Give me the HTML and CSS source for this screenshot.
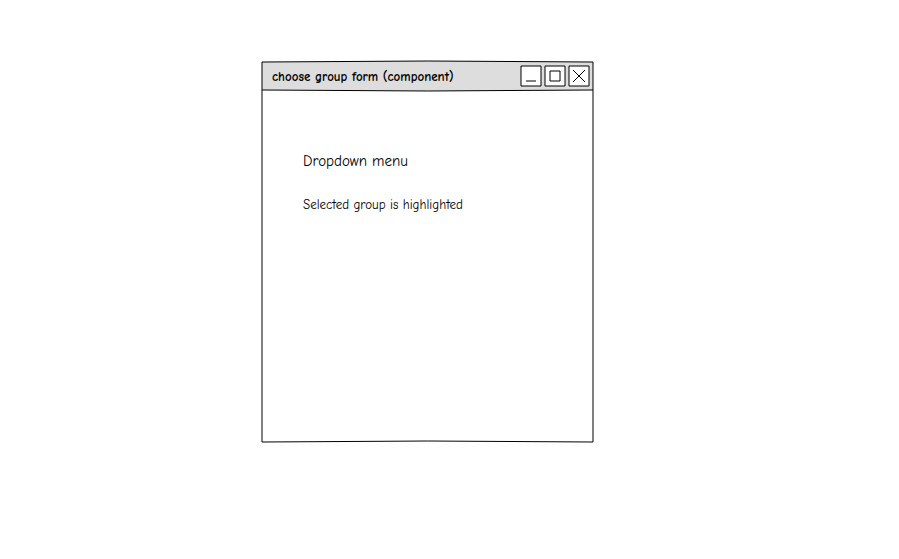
FILE: index.html
```html
<!DOCTYPE html>
<html lang="en">
<head>
<meta charset="utf-8">
<title>choose group form (component)</title>
<link rel="stylesheet" href="styles.css">
</head>
<body>
<main class="window">
  <header class="titlebar">
    <svg class="outline" viewBox="0 0 333 32" preserveAspectRatio="none" aria-hidden="true">
      <path class="bar" d="M1 2Q167 0 332 2V30Q167 32 1 30Z"/>
    </svg>
    <h1 class="title">choose group form (component)</h1>
    <div class="controls">
      <button class="control" type="button" aria-label="Minimize">
        <svg viewBox="0 0 22 22"><path class="box" d="M1 1H21V21H1Z"/><path d="M6 16H16"/></svg>
      </button>
      <button class="control" type="button" aria-label="Maximize">
        <svg viewBox="0 0 22 22"><path class="box" d="M1 1H21V21H1Z"/><path d="M6 6H16V16H6Z"/></svg>
      </button>
      <button class="control" type="button" aria-label="Close">
        <svg viewBox="0 0 22 22"><path class="box" d="M1 1H21V21H1Z"/><path d="M5 5L17 17M17 5L5 17"/></svg>
      </button>
    </div>
  </header>
  <section class="content">
    <svg class="outline" viewBox="0 0 333 352" preserveAspectRatio="none" aria-hidden="true">
      <path d="M1 -2V350Q167 348 332 350V-2"/>
    </svg>
    <h2 class="heading">Dropdown menu</h2>
    <p class="note">Selected group is highlighted</p>
  </section>
</main>
</body>
</html>
```
FILE: styles.css
```css
* {
  box-sizing: border-box;
}

body {
  display: grid;
  grid-template-columns: 261fr 333fr 305fr;
  margin: 0;
  padding: 60px 0;
  background: #fff;
  color: #000;
  font-family: "Comic Sans MS", "Comic Neue", "Open Sans", sans-serif;
}

.window {
  grid-column: 2;
}

svg {
  display: block;
  fill: none;
  stroke: #000;
}

.outline {
  position: absolute;
  inset: 0;
  z-index: -1;
  width: 100%;
  height: 100%;
  overflow: visible;
}

.bar {
  fill: #ddd;
}

.box {
  fill: #fff;
}

.titlebar {
  position: relative;
  display: flex;
  align-items: center;
  justify-content: space-between;
  min-height: 32px;
  padding: 0 4px 0 11px;
}

.title {
  margin: 0;
  padding-top: 2px;
  font-size: 13px;
  line-height: 20px;
  font-weight: 700;
}

.controls {
  display: flex;
  gap: 2px;
}

.control {
  width: 22px;
  height: 22px;
  padding: 0;
  border: 0;
  background: none;
}

.content {
  position: relative;
  min-height: 352px;
  padding: 57px 42px;
}

.heading {
  margin: 0 0 22px;
  font-size: 15px;
  line-height: 24px;
  font-weight: 400;
}

.note {
  margin: 0;
  font-size: 13px;
  line-height: 20px;
}
```
